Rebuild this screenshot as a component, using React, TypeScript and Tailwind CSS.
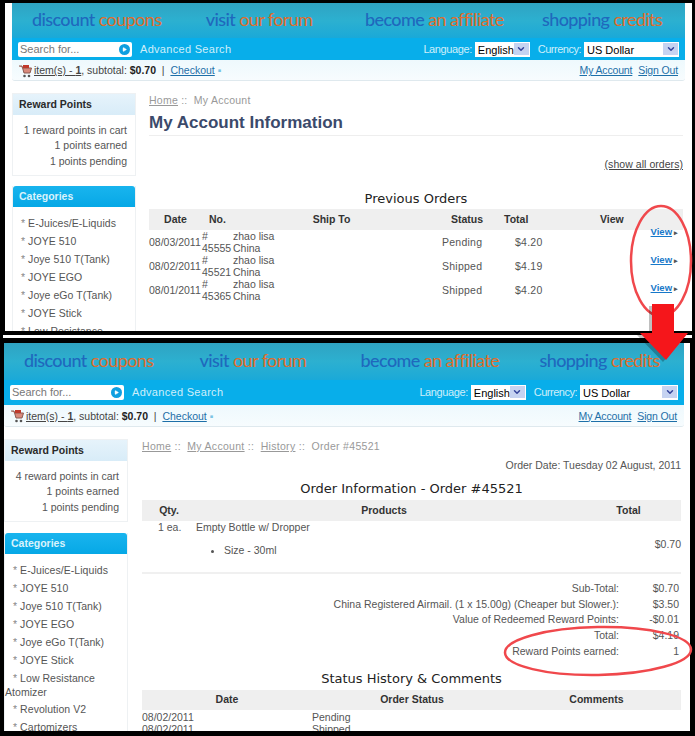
import type { ReactNode } from 'react';
import { ChevronDown, Play } from 'lucide-react';

const CATEGORIES = ['E-Juices/E-Liquids', 'JOYE 510', 'Joye 510 T(Tank)', 'JOYE EGO', 'Joye eGo T(Tank)', 'JOYE Stick'];

const ORDERS = [
  { date: '08/03/2011', no: '45555', status: 'Pending', total: '$4.20' },
  { date: '08/02/2011', no: '45521', status: 'Shipped', total: '$4.19' },
  { date: '08/01/2011', no: '45365', status: 'Shipped', total: '$4.20' },
];

const TOTALS = [
  ['Sub-Total:', '$0.70'],
  ['China Registered Airmail. (1 x 15.00g) (Cheaper but Slower.):', '$3.50'],
  ['Value of Redeemed Reward Points:', '-$0.01'],
  ['Total:', '$4.19'],
  ['Reward Points earned:', '1'],
];

const PROMOS = [
  ['discount', 'coupons'],
  ['visit', 'our forum'],
  ['become', 'an affiliate'],
  ['shopping', 'credits'],
];

function CartIcon() {
  return (
    <svg width="13" height="13" viewBox="0 0 13 13" className="shrink-0">
      <path d="M0 1h3l2 7h6l1.500-5H4" fill="#d98a7c" stroke="#8a5a50" strokeWidth="1" />
      <rect x="4" y="0" width="6" height="3" fill="#c0392b" />
      <circle cx="5.500" cy="11" r="1.300" fill="#555" />
      <circle cx="10" cy="11" r="1.300" fill="#555" />
    </svg>
  );
}

function FakeSelect({ label, width }: { label: string; width: string }) {
  return (
    <div className={`flex h-[15px] items-start justify-between overflow-hidden bg-white pl-[3px] pr-px ${width}`}>
      <span className="text-[11px] leading-[17px] text-black">{label}</span>
      <span className="mt-px flex h-[12px] w-[15px] items-center justify-center bg-[#c6d3f1]">
        <ChevronDown size={10} strokeWidth={3.500} className="text-[#34439a]" />
      </span>
    </div>
  );
}

type HeaderProps = { bannerHeight: string; barHeight: string; cartHeight: string; currencyWidth: string };

function SiteHeader({ bannerHeight, barHeight, cartHeight, currencyWidth }: HeaderProps) {
  return (
    <>
      <div className={`grid grid-cols-[26.600%_24.400%_27.100%_1fr] items-center bg-gradient-to-b from-[#2fa3c2] via-[#2cb0d0] to-[#1aa9d8] pb-[3px] pl-5 font-['Lato',sans-serif] text-[18px] leading-none tracking-[-0.6px] ${bannerHeight}`}>
        {PROMOS.map(([first, second]) => (
          <span key={first} className="whitespace-nowrap">
            <span className="font-medium text-[#1f68bd]">{first}</span>{' '}
            <span className="text-[#e06d2c]">{second}</span>
          </span>
        ))}
      </div>

      <div className={`flex items-center bg-[#08aeea] pl-[6px] pr-[6px] ${barHeight}`}>
        <div className="flex h-[15px] w-[114px] items-center justify-between rounded-[2px] bg-white pl-[2px] pr-[2px]">
          <span className="text-[11px] text-[#777]">Search for...</span>
          <span className="flex h-[11px] w-[11px] items-center justify-center rounded-full bg-[#0f9fe0]">
            <Play size={5} fill="white" className="text-white" />
          </span>
        </div>
        <span className="ml-2 text-[11px] tracking-[0.3px] text-[#cfeefa]">Advanced Search</span>
        <span className="ml-auto text-[11px] tracking-[-0.4px] text-[#cfeefa]">Language:</span>
        <FakeSelect label="English" width="ml-[3px] w-[55px]" />
        <span className="ml-2 text-[11px] tracking-[-0.5px] text-[#cfeefa]">Currency:</span>
        <FakeSelect label="US Dollar" width={`ml-[3px] ${currencyWidth}`} />
      </div>

      <div className={`flex items-center rounded-b-[3px] border-b border-[#dfe9ee] bg-gradient-to-b from-[#eef9fd] to-[#f7fcfe] px-[7px] pt-[2px] text-[10.500px] text-[#444] ${cartHeight}`}>
        <CartIcon />
        <span className="ml-[2px]">
          <span className="underline">item(s) - <b>1</b></span>, subtotal: <b className="text-[#222]">$0.70</b> &nbsp;|&nbsp;{' '}
          <span className="text-[#1d6fa8] underline">Checkout</span>
          <span className="text-[#7cc4e4]"> ▪</span>
        </span>
        <span className="ml-auto tracking-[-0.15px] text-[#1d6fa8] underline">My Account</span>
        <span className="ml-[6px] tracking-[-0.15px] text-[#1d6fa8] underline">Sign Out</span>
      </div>
    </>
  );
}

function RewardBox({ inCart }: { inCart: number }) {
  return (
    <div className="border border-[#eef1f3]">
      <div className="flex h-[21px] items-center bg-gradient-to-b from-[#e6f3fb] to-[#d8ecf8] pl-[6px] text-[10.500px] font-bold text-[#2a2a2a]">
        Reward Points
      </div>
      <div className="flex flex-col items-end pb-[6px] pr-[8px] pt-[8px] text-[10.500px] leading-[15.300px] text-[#555]">
        <span>{inCart} reward points in cart</span>
        <span>1 points earned</span>
        <span>1 points pending</span>
      </div>
    </div>
  );
}

function CategoryBox({ spacing, children }: { spacing: string; children?: ReactNode }) {
  return (
    <div className={`border-x border-[#eef1f3] ${spacing}`}>
      <div className="flex h-[21px] items-center rounded-t-[3px] bg-gradient-to-b from-[#18b4ee] to-[#05a8e6] pl-[6px] text-[10.500px] font-bold text-[#d9f3fc]">
        Categories
      </div>
      <div className="flex flex-col gap-[4px] pl-[8px] pt-[9px] text-[10.500px] leading-[14px] tracking-[0.05px] text-[#555]">
        {CATEGORIES.map((c) => (
          <span key={c}>
            <span className="text-[#888]">*</span> {c}
          </span>
        ))}
        {children}
      </div>
    </div>
  );
}

function TableHead({ className, children }: { className: string; children: ReactNode }) {
  return <div className={`bg-[#efefef] text-[10.500px] font-bold text-[#333] ${className}`}>{children}</div>;
}

function AccountPanel() {
  return (
    <section className="h-[328px] overflow-hidden bg-white pl-[7px] pr-[7px]">
      <SiteHeader bannerHeight="h-[35px]" barHeight="h-[22px]" cartHeight="h-[21px]" currencyWidth="w-[95px]" />
      <div className="mt-[12px] flex">
        <aside className="w-[124px] shrink-0">
          <RewardBox inCart={1} />
          <CategoryBox spacing="mt-[10px]">
            <span>
              <span className="text-[#888]">*</span> Low Resistance
            </span>
          </CategoryBox>
        </aside>

        <main className="ml-[13px] w-[534px] text-[10.500px] text-[#555]">
          <p className="leading-[14px] tracking-[0.25px] text-[#999]">
            <span className="underline">Home</span> :: &nbsp;My Account
          </p>
          <h1 className="mt-[5px] border-b border-[#eeeeee] pb-[2px] text-[17px] font-bold leading-[21px] text-[#3b4a6b]">
            My Account Information
          </h1>
          <p className="mt-[21px] text-right leading-[14px] tracking-[0.05px] text-[#444] underline">(show all orders)</p>
          <h2 className="mt-[20px] text-center font-['DejaVu_Sans',sans-serif] text-[13px] leading-[16px] text-[#222]">
            Previous Orders
          </h2>
          <TableHead className="mt-[2px] grid h-[21px] grid-cols-[53px_31px_197px_74px_96px_1fr] items-center">
            <span className="text-center">Date</span>
            <span className="text-center">No.</span>
            <span className="text-center">Ship To</span>
            <span className="pl-[21px]">Status</span>
            <span>Total</span>
            <span>View</span>
          </TableHead>
          <div className="flex">
            <div className="flex w-[451px] flex-col">
              {ORDERS.map((o) => (
                <div key={o.no} className="grid h-[24px] grid-cols-[53px_31px_197px_74px_1fr] items-center leading-[12px]">
                  <span>{o.date}</span>
                  <span>#<br />{o.no}</span>
                  <span>zhao lisa<br />China</span>
                  <span className="pl-[12px] tracking-[0.25px]">{o.status}</span>
                  <span className="pl-[11px] tracking-[0.25px]">{o.total}</span>
                </div>
              ))}
            </div>
            <div className="-mt-[4px] flex flex-1 flex-col items-end gap-[15px] pr-[5px] text-[9.500px] font-bold leading-[12px]">
              {ORDERS.map((o) => (
                <span key={o.no}>
                  <span className="text-[#1778c9] underline">View</span>
                  <span className="text-[7px] text-[#555]"> ▸</span>
                </span>
              ))}
            </div>
          </div>
        </main>
      </div>
    </section>
  );
}

function OrderPanel() {
  return (
    <section className="h-[388px] overflow-hidden bg-white pr-[6px]">
      <SiteHeader bannerHeight="h-[37px]" barHeight="h-[25px]" cartHeight="h-[22px]" currencyWidth="w-[98px]" />
      <div className="mt-[12px] flex">
        <aside className="w-[124px] shrink-0">
          <RewardBox inCart={4} />
          <CategoryBox spacing="mt-[11px]">
            <span>
              <span className="text-[#888]">*</span> Low Resistance
            </span>
            <span className="-ml-[8px] -mt-[4px]">Atomizer</span>
            <span className="-mt-[1px]">
              <span className="text-[#888]">*</span> Revolution V2
            </span>
            <span>
              <span className="text-[#888]">*</span> Cartomizers
            </span>
          </CategoryBox>
        </aside>

        <main className="ml-[14px] w-[539px] text-[10.500px] text-[#555]">
          <p className="leading-[14px] tracking-[0.3px] text-[#999]">
            <span className="underline">Home</span> :: &nbsp;<span className="underline">My Account</span> :: &nbsp;
            <span className="underline">History</span> :: &nbsp;Order #45521
          </p>
          <p className="mt-[5px] text-right leading-[14px]">Order Date: Tuesday 02 August, 2011</p>
          <h2 className="mt-[9px] text-center font-['DejaVu_Sans',sans-serif] text-[13px] leading-[16px] text-[#222]">
            Order Information - Order #45521
          </h2>
          <TableHead className="mt-[3px] grid h-[21px] grid-cols-[54px_376px_1fr] items-center">
            <span className="text-center">Qty.</span>
            <span className="text-center">Products</span>
            <span className="pl-[4px] text-center">Total</span>
          </TableHead>
          <div className="-mt-[1px] flex border-b-2 border-[#f0f0f0] pb-[15px]">
            <div className="flex-1">
              <p className="pl-[16px] leading-[14px]">
                1 ea. &nbsp; &nbsp; Empty Bottle w/ Dropper
              </p>
              <ul className="mt-[9px] list-disc pl-[82px] leading-[14px]">
                <li>Size - 30ml</li>
              </ul>
            </div>
            <span className="mt-[17px] self-start leading-[14px]">$0.70</span>
          </div>
          <dl className="mt-[7px] flex flex-col pr-[2px] leading-[15.700px]">
            {TOTALS.map(([label, value]) => (
              <div key={label} className="flex justify-end">
                <dt>{label}</dt>
                <dd className="w-[60px] text-right">{value}</dd>
              </div>
            ))}
          </dl>
          <h2 className="mt-[11px] text-center font-['DejaVu_Sans',sans-serif] text-[13px] leading-[16px] text-[#222]">
            Status History &amp; Comments
          </h2>
          <TableHead className="mt-[3px] grid h-[20px] grid-cols-[170px_190px_1fr] items-center">
            <span className="text-center">Date</span>
            <span className="pl-[10px] text-center">Order Status</span>
            <span className="pl-[10px] text-center">Comments</span>
          </TableHead>
          <div className="mt-[1px] grid grid-cols-[170px_1fr] leading-[12px]">
            <span>08/02/2011</span>
            <span>Pending</span>
            <span>08/02/2011</span>
            <span>Shipped</span>
          </div>
        </main>
      </div>
    </section>
  );
}

// Red callouts drawn over the two panels
function Annotations() {
  return (
    <svg width="695" height="736" viewBox="0 0 695 736" className="pointer-events-none absolute left-0 top-0">
      <ellipse cx="661" cy="261" rx="30" ry="55" fill="none" stroke="#f0484c" strokeWidth="2.500" />
      <ellipse cx="598" cy="651" rx="93" ry="24" fill="none" stroke="#f0484c" strokeWidth="2.500" transform="rotate(-1 598 651)" />
      <path d="M652 304h22v29h14l-22 27-26-27h12z" fill="#000" opacity="0.25" transform="translate(-3 2)" />
      <path d="M652 304h22v29h14l-22 27-26-27h12z" fill="#f5161b" />
    </svg>
  );
}

export default function App() {
  return (
    <div className="relative h-[736px] w-[695px] overflow-hidden bg-black font-['Liberation_Sans',Arial,sans-serif]">
      <div className="ml-[5px] mr-[3px] pt-[3px]">
        <AccountPanel />
      </div>
      <div className="mt-[4px] ml-[3px] mr-[3px] h-[3px] bg-white" />
      <div className="ml-[4px] mr-[5px] mt-[5px]">
        <OrderPanel />
      </div>
      <Annotations />
    </div>
  );
}
